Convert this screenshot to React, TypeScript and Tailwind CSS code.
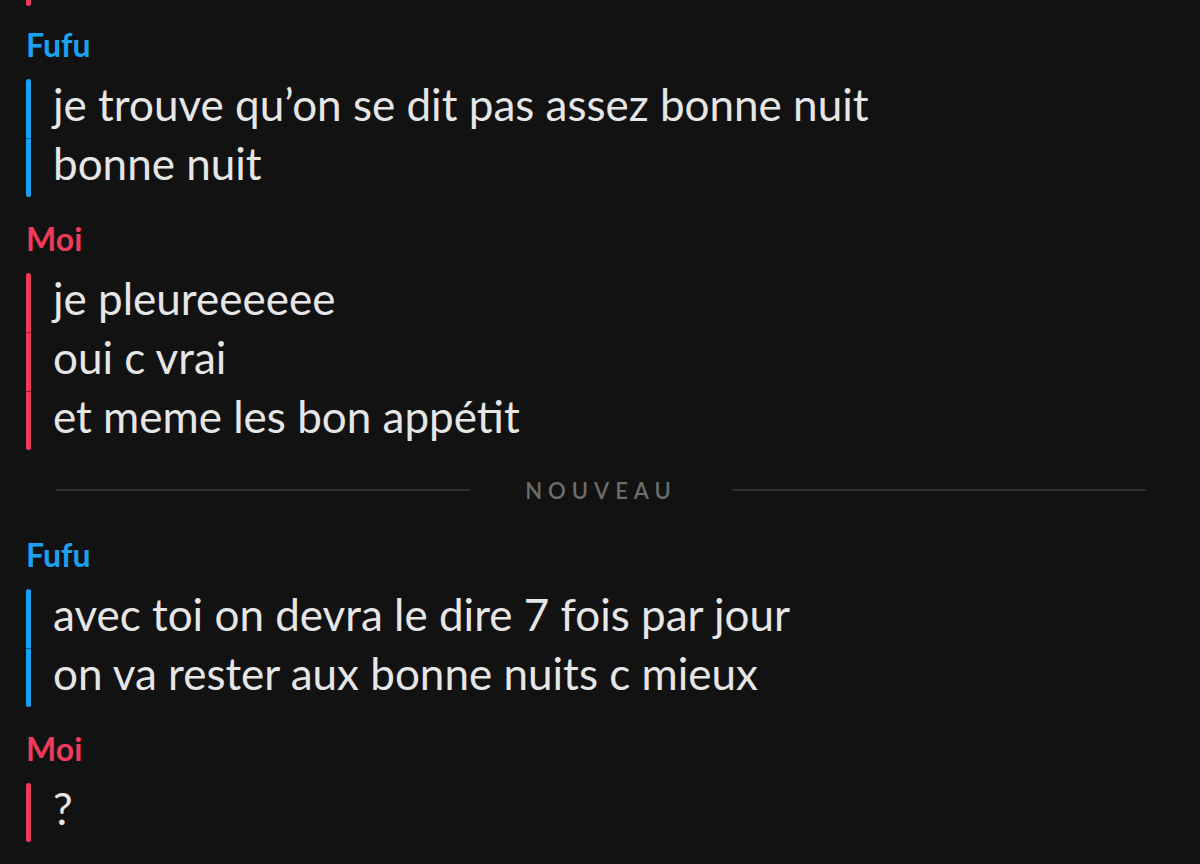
import React from "react";

type Block = { author: "Fufu" | "Moi"; lines: string[] };

const blocksBefore: Block[] = [
  { author: "Fufu", lines: ["je trouve qu’on se dit pas assez bonne nuit", "bonne nuit"] },
  { author: "Moi", lines: ["je pleureeeeee", "oui c vrai", "et meme les bon appétit"] },
];

const blocksAfter: Block[] = [
  { author: "Fufu", lines: ["avec toi on devra le dire 7 fois par jour", "on va rester aux bonne nuits c mieux"] },
  { author: "Moi", lines: ["?"] },
];

function MessageBlock({ block }: { block: Block }) {
  const isMe = block.author === "Moi";
  return (
    <div className="mb-[24px]">
      {/* author name */}
      <div
        className={
          "h-[36px] text-[32px] leading-[36px] font-bold " +
          (isMe ? "text-[#ee3b5b]" : "text-[#1ba1f1]")
        }
      >
        {block.author}
      </div>

      <div className="mt-[16px] flex flex-col">
        {block.lines.map((line, i) => (
          <div key={i} className="flex h-[59px] items-stretch">
            <div
              className={
                "w-[5px] shrink-0 " +
                (isMe ? "bg-[#ee3b5b] " : "bg-[#1ba1f1] ") +
                (i === 0 ? "rounded-t-full " : "border-t border-black/40 ") +
                (i === block.lines.length - 1 ? "rounded-b-full" : "")
              }
            />
            <div className="ml-[22px] h-[51px] text-[44px] leading-[51px] text-[#e6e6e6] whitespace-nowrap">
              {line}
            </div>
          </div>
        ))}
      </div>
    </div>
  );
}

export default function App() {
  return (
    <div
      className="min-h-screen w-[1200px] h-[864px] overflow-hidden bg-[#121212] pl-[26px]"
      style={{ fontFamily: "Lato, 'Noto Sans', sans-serif" }}
    >
      {/* tail of the previous bar */}
      <div className="h-[6px] w-[5px] rounded-b-full bg-[#ee3b5b]" />

      <div className="mt-[21px]">
        {blocksBefore.map((b, i) => (
          <MessageBlock key={i} block={b} />
        ))}
      </div>

      {/* "new" divider */}
      <div className="-mt-[24px] pt-[28px] mb-[35px]">
        <div className="ml-[30px] flex h-[24px] w-[1090px] items-center gap-[55px]">
          <div className="h-[2px] flex-1 bg-[#2e2e2e]" />
          <span className="text-[22px] font-semibold tracking-[6px] text-[#6c6c6c]">NOUVEAU</span>
          <div className="h-[2px] flex-1 bg-[#2e2e2e]" />
        </div>
      </div>

      <div>
        {blocksAfter.map((b, i) => (
          <MessageBlock key={i} block={b} />
        ))}
      </div>
    </div>
  );
}
